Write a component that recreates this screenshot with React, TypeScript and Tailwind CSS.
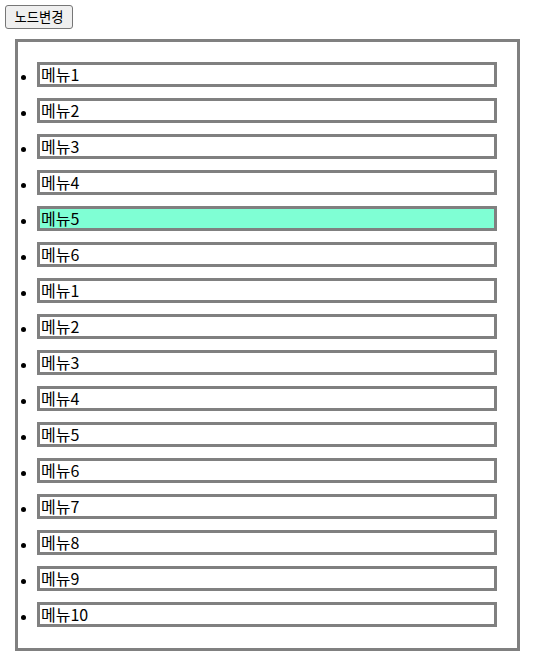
const menus = ['메뉴1', '메뉴2', '메뉴3', '메뉴4', '메뉴5', '메뉴6', '메뉴1', '메뉴2', '메뉴3', '메뉴4', '메뉴5', '메뉴6', '메뉴7', '메뉴8', '메뉴9', '메뉴10'];

export default function App() {
  return (
    <div
      className="p-[5px] bg-white text-black"
      style={{ fontFamily: '"Noto Sans CJK KR", "Noto Sans", sans-serif' }}
    >
      <button className="block w-[68px] h-[24px] text-[13.33px] leading-none bg-[#efefef] border border-[#767676] rounded-[3px]">
        노드변경
      </button>
      <div className="mt-[10px] ml-[10px] w-[505px] border-[3px] border-[#808080]">
        <ul className="pt-[20px] pb-[21px] pl-[3px] pr-[20px] flex flex-col gap-[11px]">
          {menus.map((m, i) => (
            <li key={i} className="flex items-center">
              <span className="w-[5px] h-[5px] mt-[6px] rounded-full bg-black shrink-0" />
              <div
                className={`ml-[11px] flex-1 h-[25px] border-[3px] border-[#808080] pl-[1px] text-[16px] leading-[19px] ${
                  i === 4 ? 'bg-[#7fffd4]' : 'bg-white'
                }`}
              >
                {m}
              </div>
            </li>
          ))}
        </ul>
      </div>
    </div>
  );
}
